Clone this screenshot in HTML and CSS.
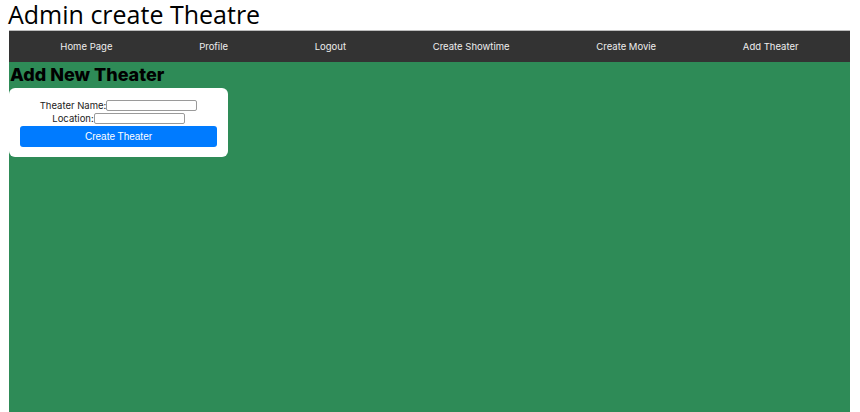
FILE: index.html
```html
<!DOCTYPE html>
<html>
<head>
<meta charset="utf-8">
<link rel="stylesheet" href="styles.css">
</head>
<body>
<div class="caption">Admin create Theatre</div>
<div class="frame">
  <nav class="nav">
    <a>Home Page</a>
    <a>Profile</a>
    <a>Logout</a>
    <a>Create Showtime</a>
    <a>Create Movie</a>
    <a>Add Theater</a>
  </nav>
  <h2 class="title">Add New Theater</h2>
  <form class="card">
    <div class="row"><label>Theater Name:</label><input class="field"></div>
    <div class="row"><label>Location:</label><input class="field"></div>
    <button class="btn" type="button">Create Theater</button>
  </form>
</div>
</body>
</html>
```
FILE: styles.css
```css
html, body { margin: 0; padding: 0; background: #fff; }
body { width: 860px; height: 412px; overflow: hidden; }
.caption {
  font-family: "Open Sans", sans-serif;
  font-size: 25px;
  line-height: 28px;
  height: 30px;
  padding-left: 8px;
  color: #000;
  white-space: nowrap;
}
.frame {
  margin-left: 9px;
  width: 841px;
  height: 382px;
  background: #2e8b57;
  border-top: 1px solid #bdbdbd;
  box-sizing: border-box;
}
.nav {
  height: 31px;
  background: #333;
  display: flex;
  justify-content: space-around;
  align-items: center;
  padding: 0 8px;
  font-family: Inter, sans-serif;
  font-size: 9.5px;
  color: #eee;
}
.title {
  margin: 0;
  padding: 2px 0 0 1px;
  font-family: Inter, sans-serif;
  font-weight: 800;
  font-size: 18px;
  line-height: 22px;
  color: #000;
}
.card {
  margin-top: 2px;
  width: 219px;
  box-sizing: border-box;
  background: #fff;
  border-radius: 6px;
  padding: 11px 11px 10px;
  display: flex;
  flex-direction: column;
  align-items: center;
  font-family: Inter, sans-serif;
  font-size: 9.5px;
  color: #222;
}
.row { display: flex; align-items: center; height: 13px; }
.field {
  width: 91px;
  height: 11px;
  box-sizing: border-box;
  border: 1px solid #9a9a9a;
  border-radius: 2px;
  padding: 0;
  margin: 0;
}
.btn {
  margin-top: 1px;
  width: 197px;
  height: 21px;
  background: #007bff;
  color: #fff;
  border: none;
  border-radius: 3px;
  font-family: "Liberation Sans", Arial, sans-serif;
  font-size: 10px;
}
```
